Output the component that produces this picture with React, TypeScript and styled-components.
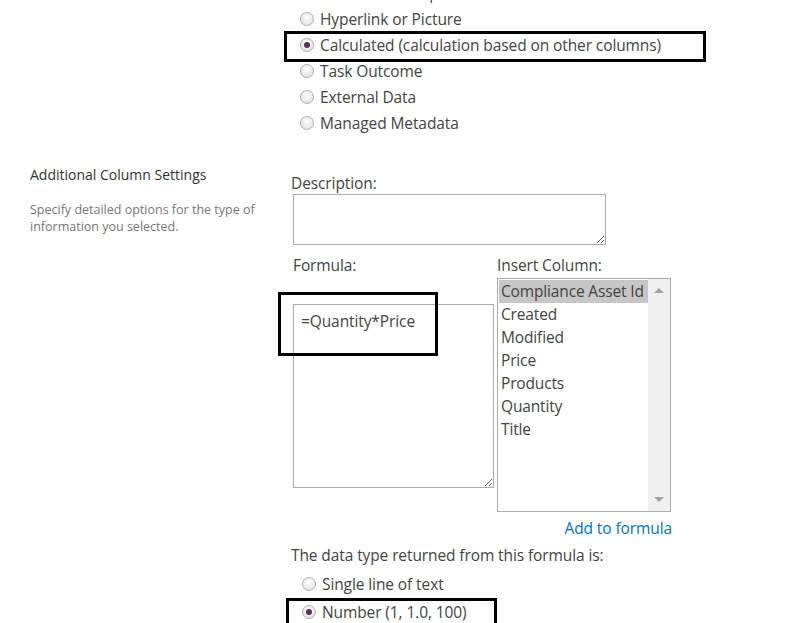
import styled, { createGlobalStyle } from 'styled-components'

const GlobalStyle = createGlobalStyle`
  html, body {
    margin: 0;
    padding: 0;
    background: #fff;
    overflow: hidden;
  }
  body {
    font-family: "Open Sans", "Noto Sans", sans-serif;
    color: #444;
  }
`

const Page = styled.div`
  width: 798px;
  height: 623px;
  overflow: hidden;
`

const ChoiceList = styled.div`
  margin-top: -20px;
  padding-left: 300px;
  display: flex;
  flex-direction: column;
`

const ChoiceRow = styled.label<{ $boxed?: boolean; $boxWidth?: number }>`
  position: relative;
  display: flex;
  align-items: center;
  height: 26px;
  font-size: 15.5px;
  letter-spacing: -0.1px;
  color: #444;

  ${(p) =>
    p.$boxed &&
    `
    &::after {
      content: '';
      position: absolute;
      left: -16px;
      top: -1px;
      width: ${p.$boxWidth}px;
      height: 25px;
      border: 3px solid #000;
    }
  `}
`

const RadioDot = styled.span<{ $checked?: boolean }>`
  flex: none;
  width: 14px;
  height: 14px;
  border-radius: 50%;
  border: 1px solid #b0b0b0;
  box-sizing: border-box;
  background: radial-gradient(circle at 50% 35%, #fdfdfd 0%, #e8e8e8 65%, #d8d8d8 100%);
  margin-right: 6px;
  display: flex;
  align-items: center;
  justify-content: center;

  &::before {
    content: '';
    display: ${(p) => (p.$checked ? 'block' : 'none')};
    width: 6px;
    height: 6px;
    border-radius: 50%;
    background: #5b2c5e;
  }
`

const Settings = styled.div`
  display: grid;
  grid-template-columns: 291px 1fr;
  margin-top: 29px;
`

const SideInfo = styled.div`
  padding-left: 30px;
  padding-top: 1px;
`

const SideTitle = styled.div`
  font-size: 14px;
  color: #333;
  line-height: 18px;
`

const SideText = styled.div`
  margin-top: 17px;
  font-size: 12.5px;
  line-height: 17px;
  color: #777;
  width: 250px;
`

const Fields = styled.div`
  display: flex;
  flex-direction: column;
  padding-top: 9px;
`

const FieldLabel = styled.div`
  font-size: 15.5px;
  letter-spacing: -0.1px;
  line-height: 18px;
  color: #444;
`

const TextBox = styled.textarea<{ $w: number; $h: number }>`
  display: block;
  box-sizing: border-box;
  width: ${(p) => p.$w}px;
  height: ${(p) => p.$h}px;
  border: 1px solid #ababab;
  font-family: "Open Sans", "Noto Sans", sans-serif;
  font-size: 15.5px;
  letter-spacing: -0.1px;
  color: #444;
  padding: 5px 7px;
  margin: 0;
  outline: none;
  resize: both;
`

const DescBox = styled(TextBox)`
  margin-top: 2px;
  margin-left: 2px;
`

const FormulaRow = styled.div`
  display: flex;
  margin-top: 11px;
  padding-left: 2px;
`

const FormulaCol = styled.div`
  width: 204px;
  display: flex;
  flex-direction: column;
`

const FormulaBox = styled.div`
  position: relative;
  margin-top: 30px;

  &::after {
    content: '';
    position: absolute;
    left: -15px;
    top: -12px;
    width: 154px;
    height: 58px;
    border: 3px solid #000;
    pointer-events: none;
  }
`

const InsertCol = styled.div`
  display: flex;
  flex-direction: column;
  align-items: flex-start;
`

const ListBox = styled.div`
  margin-top: 4px;
  width: 174px;
  height: 234px;
  box-sizing: border-box;
  border: 1px solid #ababab;
  display: flex;
  padding: 1px 0 0 1px;
`

const ListItems = styled.div`
  flex: 1;
  display: flex;
  flex-direction: column;
  overflow: hidden;
`

const ListItem = styled.div<{ $selected?: boolean }>`
  height: 23px;
  line-height: 22px;
  padding-left: 2px;
  font-size: 15.5px;
  letter-spacing: -0.15px;
  white-space: nowrap;
  color: #444;
  background: ${(p) => (p.$selected ? '#c6c6c6' : 'transparent')};
`

const ScrollTrack = styled.div`
  width: 22px;
  margin-top: -1px;
  background: #f0f0f0;
  display: flex;
  flex-direction: column;
  justify-content: space-between;
  align-items: center;
  padding: 9px 0 9px;
`

const Arrow = styled.span<{ $down?: boolean }>`
  width: 0;
  height: 0;
  border-left: 5px solid transparent;
  border-right: 5px solid transparent;
  ${(p) =>
    p.$down
      ? 'border-top: 5px solid #a3a3a3;'
      : 'border-bottom: 5px solid #a3a3a3;'}
`

const AddLink = styled.a`
  align-self: stretch;
  width: 175px;
  text-align: right;
  margin-top: 7px;
  font-size: 15.5px;
  letter-spacing: -0.1px;
  line-height: 18px;
  color: #0072c6;
  text-decoration: none;
  cursor: pointer;
`

const ReturnLabel = styled(FieldLabel)`
  margin-top: 9px;
`

const ReturnList = styled.div`
  margin-top: 6px;
  padding-left: 11px;
  display: flex;
  flex-direction: column;
`

const ReturnRow = styled(ChoiceRow)`
  height: 28px;

  &::after {
    left: -16px;
    top: 0px;
  }
`

const types = [
  'Person or Group',
  'Hyperlink or Picture',
  'Calculated (calculation based on other columns)',
  'Task Outcome',
  'External Data',
  'Managed Metadata',
]

const columns = [
  'Compliance Asset Id',
  'Created',
  'Modified',
  'Price',
  'Products',
  'Quantity',
  'Title',
]

export default function App() {
  return (
    <Page>
      <GlobalStyle />
      <ChoiceList>
        {types.map((t) => {
          const on = t.startsWith('Calculated')
          return (
            <ChoiceRow key={t} $boxed={on} $boxWidth={416}>
              <RadioDot $checked={on} />
              {t}
            </ChoiceRow>
          )
        })}
      </ChoiceList>

      <Settings>
        <SideInfo>
          <SideTitle>Additional Column Settings</SideTitle>
          <SideText>Specify detailed options for the type of information you selected.</SideText>
        </SideInfo>

        <Fields>
          <FieldLabel>Description:</FieldLabel>
          <DescBox $w={313} $h={51} />

          <FormulaRow>
            <FormulaCol>
              <FieldLabel>Formula:</FieldLabel>
              <FormulaBox>
                <TextBox $w={201} $h={184} defaultValue="=Quantity*Price" />
              </FormulaBox>
            </FormulaCol>

            <InsertCol>
              <FieldLabel>Insert Column:</FieldLabel>
              <ListBox>
                <ListItems>
                  {columns.map((c, i) => (
                    <ListItem key={c} $selected={i === 0}>
                      {c}
                    </ListItem>
                  ))}
                </ListItems>
                <ScrollTrack>
                  <Arrow />
                  <Arrow $down />
                </ScrollTrack>
              </ListBox>
              <AddLink>Add to formula</AddLink>
            </InsertCol>
          </FormulaRow>

          <ReturnLabel>The data type returned from this formula is:</ReturnLabel>
          <ReturnList>
            <ReturnRow>
              <RadioDot />
              Single line of text
            </ReturnRow>
            <ReturnRow $boxed $boxWidth={205}>
              <RadioDot $checked />
              Number (1, 1.0, 100)
            </ReturnRow>
          </ReturnList>
        </Fields>
      </Settings>
    </Page>
  )
}
